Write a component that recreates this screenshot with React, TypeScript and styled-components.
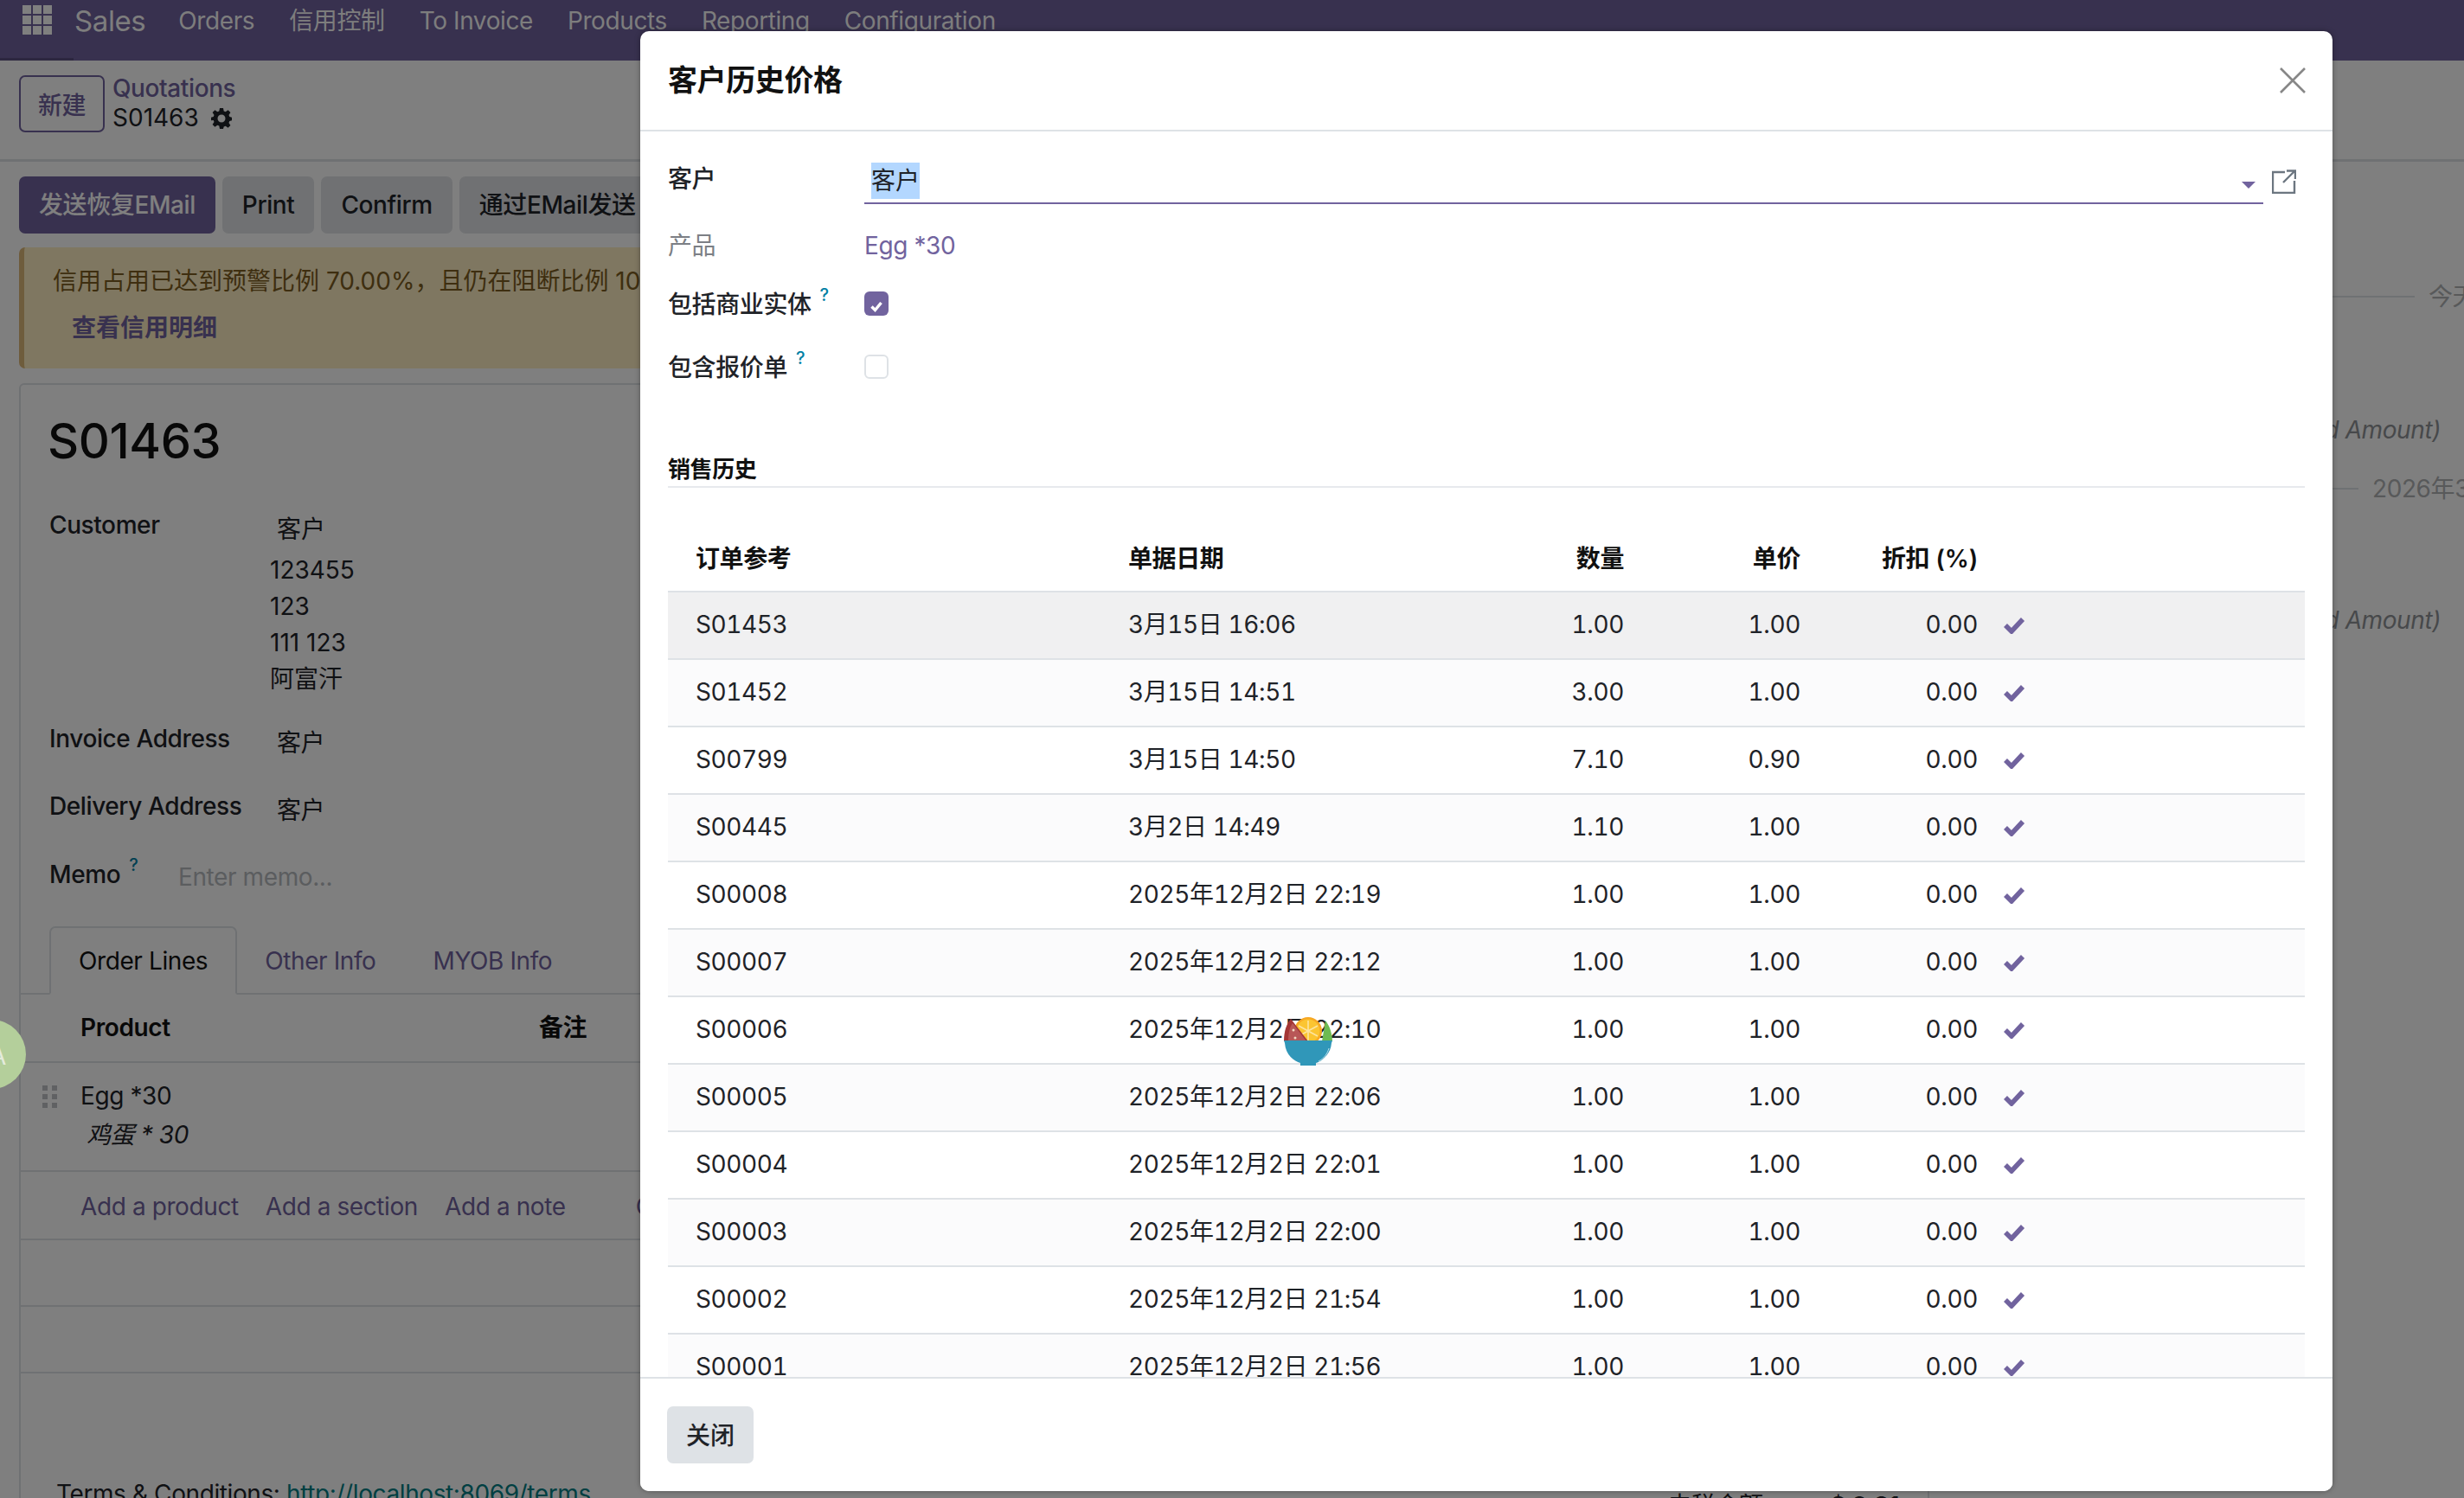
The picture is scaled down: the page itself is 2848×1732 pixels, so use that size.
import styled, { createGlobalStyle } from 'styled-components'

const orders = [
  ['S01453', '3月15日 16:06', '1.00', '1.00'],
  ['S01452', '3月15日 14:51', '3.00', '1.00'],
  ['S00799', '3月15日 14:50', '7.10', '0.90'],
  ['S00445', '3月2日 14:49', '1.10', '1.00'],
  ['S00008', '2025年12月2日 22:19', '1.00', '1.00'],
  ['S00007', '2025年12月2日 22:12', '1.00', '1.00'],
  ['S00006', '2025年12月2日 22:10', '1.00', '1.00'],
  ['S00005', '2025年12月2日 22:06', '1.00', '1.00'],
  ['S00004', '2025年12月2日 22:01', '1.00', '1.00'],
  ['S00003', '2025年12月2日 22:00', '1.00', '1.00'],
  ['S00002', '2025年12月2日 21:54', '1.00', '1.00'],
  ['S00001', '2025年12月2日 21:56', '1.00', '1.00'],
]

const navItems = ['Orders', '信用控制', 'To Invoice', 'Products', 'Reporting', 'Configuration']

function App() {
  return (
    <>
      <GlobalStyle />
      <Page>
        <NavBar>
          <AppsGrid>
            {Array.from({ length: 9 }).map((_, i) => (
              <AppsDot key={i} />
            ))}
          </AppsGrid>
          <BrandName>Sales</BrandName>
          {navItems.map((item) => (
            <NavItem key={item}>{item}</NavItem>
          ))}
        </NavBar>

        <ControlPanel>
          <NewButton>新建</NewButton>
          <Breadcrumb>
            <BreadcrumbLink>Quotations</BreadcrumbLink>
            <BreadcrumbCurrent>
              S01463
              <GearIcon />
            </BreadcrumbCurrent>
          </Breadcrumb>
        </ControlPanel>

        <Body>
          <Main>
            <ActionBar>
              <ActionButton $primary>发送恢复EMail</ActionButton>
              <ActionButton>Print</ActionButton>
              <ActionButton>Confirm</ActionButton>
              <ActionButton>通过EMail发送</ActionButton>
            </ActionBar>

            <Alert>
              <AlertText>信用占用已达到预警比例 70.00%，且仍在阻断比例 100.00% 以内</AlertText>
              <AlertLink>查看信用明细</AlertLink>
            </Alert>

            <Sheet>
              <SheetTitle>S01463</SheetTitle>
              <SheetField $h={247}>
                <SheetLabel>Customer</SheetLabel>
                <AddressBlock>
                  <PartnerName>客户</PartnerName>
                  <AddressLines>
                    <div>123455</div>
                    <div>123</div>
                    <div>111 123</div>
                    <div>阿富汗</div>
                  </AddressLines>
                </AddressBlock>
              </SheetField>
              <SheetField $h={78}>
                <SheetLabel>Invoice Address</SheetLabel>
                <PartnerName>客户</PartnerName>
              </SheetField>
              <SheetField $h={79}>
                <SheetLabel>Delivery Address</SheetLabel>
                <PartnerName>客户</PartnerName>
              </SheetField>
              <MemoField>
                <SheetLabel>
                  Memo<Help>?</Help>
                </SheetLabel>
                <MemoInput>Enter memo...</MemoInput>
              </MemoField>

              <Tabs>
                <Tab $active>Order Lines</Tab>
                <Tab>Other Info</Tab>
                <Tab>MYOB Info</Tab>
              </Tabs>

              <LinesHeader>
                <span>Product</span>
                <span>备注</span>
              </LinesHeader>
              <LineRow>
                <GripIcon>
                  {Array.from({ length: 6 }).map((_, i) => (
                    <GripDot key={i} />
                  ))}
                </GripIcon>
                <div>Egg *30</div>
                <LineNote>鸡蛋 * 30</LineNote>
              </LineRow>
              <AddRow>
                <AddLink>Add a product</AddLink>
                <AddLink>Add a section</AddLink>
                <AddLink>Add a note</AddLink>
                <AddLink $far>Catalog</AddLink>
              </AddRow>
              <EmptyRow />
              <EmptyRow />
              <SheetFooter>
                <Terms>
                  Terms &amp; Conditions: <TermsLink>http://localhost:8069/terms</TermsLink>
                </Terms>
                <Totals>
                  <span>未税金额:</span>
                  <strong>$ 0.81</strong>
                </Totals>
              </SheetFooter>
            </Sheet>
          </Main>

          <Chatter>
            <DateDivider $top={135} $line={561}>
              <span>今天</span>
            </DateDivider>
            <ChatMessage $top={112}>(Untaxed Amount)</ChatMessage>
            <DateDivider $top={26} $line={496}>
              <span>2026年3月15日</span>
            </DateDivider>
            <ChatMessage $top={110}>(Untaxed Amount)</ChatMessage>
          </Chatter>
        </Body>

        <Overlay>
          <Modal>
            <ModalHeader>
              <ModalTitle>客户历史价格</ModalTitle>
              <CloseIcon viewBox="0 0 30 30">
                <path d="M1 1 L29 29 M29 1 L1 29" />
              </CloseIcon>
            </ModalHeader>

            <ModalBody>
              <Field $h={77}>
                <FieldLabel>客户</FieldLabel>
                <InputRow>
                  <InputLine>
                    <Selected>客户</Selected>
                    <Caret />
                  </InputLine>
                  <OpenIcon viewBox="0 0 28 28">
                    <path d="M15 3 H1 V27 H26 V13" />
                    <path d="M13 15 L26 2 M17 1.5 H27 V11" />
                  </OpenIcon>
                </InputRow>
              </Field>
              <Field $h={68}>
                <FieldLabel $muted>产品</FieldLabel>
                <ProductLink>Egg *30</ProductLink>
              </Field>
              <Field $h={73}>
                <FieldLabel>
                  包括商业实体<Help>?</Help>
                </FieldLabel>
                <Checkbox $checked>
                  <svg viewBox="0 0 28 28" width="28" height="28">
                    <path d="M8.5 14.5 L12.5 18.5 L19.5 10" fill="none" stroke="#fff" strokeWidth="3.4" />
                  </svg>
                </Checkbox>
              </Field>
              <Field $h={119}>
                <FieldLabel>
                  包含报价单<Help>?</Help>
                </FieldLabel>
                <Checkbox />
              </Field>

              <SectionTitle>销售历史</SectionTitle>

              <HistoryTable>
                <colgroup>
                  <col style={{ width: 500 }} />
                  <col style={{ width: 448 }} />
                  <col style={{ width: 173 }} />
                  <col style={{ width: 204 }} />
                  <col style={{ width: 205 }} />
                  <col />
                </colgroup>
                <thead>
                  <tr>
                    <HeadCell>订单参考</HeadCell>
                    <HeadCell>单据日期</HeadCell>
                    <HeadCell $num>数量</HeadCell>
                    <HeadCell $num>单价</HeadCell>
                    <HeadCell $num>折扣 (%)</HeadCell>
                    <HeadCell />
                  </tr>
                </thead>
                <tbody>
                  {orders.map((row, i) => (
                    <HistoryRow key={row[0]} $hover={i === 0} $striped={i % 2 === 1}>
                      <TextCell>{row[0]}</TextCell>
                      <TextCell>{row[1]}</TextCell>
                      <NumCell>{row[2]}</NumCell>
                      <NumCell>{row[3]}</NumCell>
                      <NumCell>0.00</NumCell>
                      <CheckCell>
                        <CheckMark viewBox="0 0 26 20">
                          <path d="M3 10 L10 17 L23 3" />
                        </CheckMark>
                      </CheckCell>
                    </HistoryRow>
                  ))}
                </tbody>
              </HistoryTable>
            </ModalBody>

            <ModalFooter>
              <CloseButton>关闭</CloseButton>
            </ModalFooter>
          </Modal>
        </Overlay>

        <AssistantBubble>A</AssistantBubble>
        <FruitBowl viewBox="0 0 56 56">
          <path d="M44 28 L48 4 C53 10 56 20 56 28 Z" fill="#6dbb52" />
          <circle cx="28" cy="16" r="16" fill="#f7a823" />
          <circle cx="28" cy="16" r="13.500" fill="#fbc531" />
          <path d="M28 4 V28 M17 10 L39 22 M39 10 L17 22" stroke="#fde4a0" strokeWidth="1.6" />
          <path d="M0 28 C0 16 3 8 8 2 L28 28 Z" fill="#a33636" />
          <path d="M5 28 C5 18 7 11 10 7 L26 28 Z" fill="#b85757" />
          <circle cx="11" cy="15" r="1.500" fill="#f1d8c0" />
          <circle cx="13" cy="24" r="1.500" fill="#f1d8c0" />
          <path d="M0 27 H56 L55 30 C54 44 42 52 37 53 V56 H19 V53 C12 51 2 44 1 30 Z" fill="#3097b9" />
          <path d="M40 51 C46 48 50 43 52 36" fill="none" stroke="#d8eef4" strokeWidth="0.8" />
        </FruitBowl>
      </Page>
    </>
  )
}

function GearIcon() {
  return (
    <GearSvg viewBox="0 0 24 24">
      <path d="M10 0h4l.7 3.4 2 .8L19.6 2.300l2.800 2.800-1.900 2.900.8 2L24 10.700v3.600l-2.700.7-.8 2 1.900 2.900-2.800 2.800-2.900-1.900-2 .8L14 24h-4l-.7-3.400-2-.8-2.900 1.900-2.800-2.800 1.900-2.900-.8-2L0 14.300v-3.600l2.700-.7.8-2-1.900-2.900 2.800-2.800 2.900 1.900 2-.8z M12 7.500a4.500 4.500 0 1 0 0 9 4.500 4.500 0 0 0 0-9z" fillRule="evenodd" />
    </GearSvg>
  )
}

const GlobalStyle = createGlobalStyle`
  html, body {
    margin: 0;
    padding: 0;
  }
  body {
    font-family: Inter, "Noto Sans CJK SC", sans-serif;
    font-size: 28px;
    line-height: 42px;
    letter-spacing: -0.4px;
    color: #1f2328;
  }
  * {
    box-sizing: border-box;
  }
`

const Page = styled.div`
  position: relative;
  width: 2848px;
  height: 1732px;
  overflow: hidden;
  background: #fff;
`

const NavBar = styled.nav`
  position: relative;
  display: flex;
  height: 70px;
  padding-left: 26px;
  background: #71639e;
  color: rgba(255, 255, 255, 0.98);
  &::after {
    content: '';
    position: absolute;
    left: 0;
    bottom: 0;
    width: 85px;
    height: 3px;
    background: #5b4f80;
  }
`

const AppsGrid = styled.div`
  display: grid;
  grid-template-columns: repeat(3, 10px);
  grid-auto-rows: 10px;
  gap: 2px;
  margin-top: 6px;
  margin-right: 26px;
  height: 34px;
`

const AppsDot = styled.span`
  background: #fff;
`

const BrandName = styled.div`
  font-size: 33px;
  line-height: 48px;
  margin-right: 38px;
`

const NavItem = styled.div`
  line-height: 48px;
  margin-right: 40px;
  white-space: nowrap;
`

const ControlPanel = styled.div`
  display: flex;
  gap: 9px;
  height: 117px;
  padding: 17px 22px 0;
  border-bottom: 3px solid #dee2e6;
`

const NewButton = styled.button`
  width: 99px;
  height: 66px;
  padding: 3px 0 0;
  font: inherit;
  letter-spacing: inherit;
  font-weight: 500;
  color: #71639e;
  background: transparent;
  border: 2px solid #71639e;
  border-radius: 7px;
`

const Breadcrumb = styled.div`
  display: flex;
  flex-direction: column;
  margin-top: -2px;
  line-height: 34px;
`

const BreadcrumbLink = styled.div`
  font-weight: 500;
  color: #71639e;
`

const BreadcrumbCurrent = styled.div`
  display: flex;
  align-items: center;
  gap: 14px;
  letter-spacing: 0;
`

const GearSvg = styled.svg`
  width: 24px;
  height: 24px;
  margin-top: 2px;
  fill: #1f2328;
`

const Body = styled.div`
  display: flex;
  height: 1545px;
`

const Main = styled.main`
  flex: 0 0 2230px;
  padding-left: 22px;
`

const ActionBar = styled.div`
  display: flex;
  gap: 8px;
  padding-top: 17px;
`

const ActionButton = styled.button<{ $primary?: boolean }>`
  height: 66px;
  padding: 0 23px;
  font: inherit;
  letter-spacing: inherit;
  font-weight: 500;
  color: ${(p) => (p.$primary ? '#fff' : '#1f2328')};
  background: ${(p) => (p.$primary ? '#71639e' : '#e0e2e6')};
  border: 0;
  border-radius: 7px;
  white-space: nowrap;
`

const Alert = styled.div`
  height: 140px;
  margin-top: 16px;
  padding: 18px 0 0 33px;
  background: #ffeec2;
  border-left: 6px solid #ddb878;
  border-radius: 7px;
  color: #7c5d20;
  white-space: nowrap;
  letter-spacing: 0;
`

const AlertText = styled.div`
  line-height: 42px;
`

const AlertLink = styled.div`
  margin: 12px 0 0 22px;
  font-weight: 600;
  color: #71639e;
`

const Sheet = styled.section`
  height: 1300px;
  margin-top: 17px;
  padding-top: 30px;
  border: 2px solid #dee2e6;
  border-radius: 6px;
`

const SheetTitle = styled.h1`
  margin: 0 0 41px 31px;
  font-size: 56px;
  line-height: 70px;
  font-weight: 500;
  letter-spacing: -0.4px;
  color: #111;
`

const SheetField = styled.div<{ $h: number }>`
  display: flex;
  height: ${(p) => p.$h}px;
  padding-left: 33px;
`

const SheetLabel = styled.div`
  flex: 0 0 255px;
  font-weight: 500;
`

const AddressBlock = styled.div`
  display: flex;
  flex-direction: column;
  letter-spacing: 0;
`

const PartnerName = styled.div`
  margin: 5px 0 0 8px;
`

const AddressLines = styled.div`
  margin-top: 5px;
`

const MemoField = styled.div`
  display: flex;
  height: 81px;
  padding-left: 33px;
`

const MemoInput = styled.div`
  margin: 3px 0 0 -106px;
  color: #b6babf;
`

const Help = styled.sup`
  position: relative;
  top: -4px;
  margin-left: 10px;
  font-size: 20px;
  line-height: 0;
  vertical-align: 10px;
  font-weight: 500;
  color: #0180a5;
`

const Tabs = styled.div`
  display: flex;
  height: 79px;
  padding-left: 33px;
  border-bottom: 2px solid #dee2e6;
`

const Tab = styled.div<{ $active?: boolean }>`
  height: 79px;
  padding: 17px 32px 0 ${(p) => (p.$active ? 32 : 30)}px;
  border: 2px solid ${(p) => (p.$active ? '#dee2e6' : 'transparent')};
  border-bottom-color: ${(p) => (p.$active ? '#fff' : 'transparent')};
  border-radius: 7px 7px 0 0;
  color: ${(p) => (p.$active ? '#111' : '#71639e')};
`

const LinesHeader = styled.div`
  display: grid;
  grid-template-columns: 530px 1fr;
  height: 79px;
  padding: 17px 0 0 69px;
  font-weight: 600;
  color: #111;
  border-bottom: 2px solid #dee2e6;
`

const LineRow = styled.div`
  position: relative;
  height: 126px;
  padding: 17px 0 0 69px;
  border-bottom: 2px solid #dee2e6;
`

const LineNote = styled.div`
  margin: 3px 0 0 7px;
  font-style: italic;
`

const GripIcon = styled.div`
  position: absolute;
  left: 25px;
  top: 26px;
  display: grid;
  grid-template-columns: repeat(2, 6px);
  grid-auto-rows: 6px;
  gap: 4px 5px;
`

const GripDot = styled.span`
  background: #c0c3c7;
`

const AddRow = styled.div`
  display: flex;
  gap: 31px;
  height: 79px;
  padding: 19px 0 0 69px;
  border-bottom: 2px solid #dee2e6;
`

const AddLink = styled.span<{ $far?: boolean }>`
  margin-left: ${(p) => (p.$far ? 50 : 0)}px;
  color: #71639e;
`

const EmptyRow = styled.div`
  height: 77px;
  border-bottom: 2px solid #dee2e6;
`

const SheetFooter = styled.div`
  display: flex;
  justify-content: space-between;
  padding: 118px 0 0 41px;
`

const Terms = styled.div`
  white-space: nowrap;
`

const TermsLink = styled.span`
  color: #017e84;
`

const Totals = styled.div`
  display: flex;
  gap: 70px;
  margin: 14px 33px 0 0;
  strong {
    font-weight: 700;
  }
`

const Chatter = styled.aside`
  flex: 1;
  min-width: 0;
  overflow: hidden;
  font-size: 28px;
`

const DateDivider = styled.div<{ $top: number; $line: number }>`
  display: flex;
  align-items: center;
  gap: 16px;
  margin-top: ${(p) => p.$top}px;
  color: #b0b2b5;
  white-space: nowrap;
  &::before {
    content: '';
    flex: 0 0 ${(p) => p.$line}px;
    height: 2px;
    background: #dee2e6;
  }
`

const ChatMessage = styled.div<{ $top: number }>`
  margin-top: ${(p) => p.$top}px;
  padding-right: 27px;
  text-align: right;
  font-style: italic;
  color: #8f9296;
  white-space: nowrap;
`

const Overlay = styled.div`
  position: absolute;
  inset: 0;
  padding: 36px 0 0 740px;
  background: rgba(0, 0, 0, 0.5);
`

const Modal = styled.div`
  display: flex;
  flex-direction: column;
  width: 1956px;
  height: 1688px;
  background: #fff;
  border-radius: 10px;
  box-shadow: 0 0 6px rgba(0, 0, 0, 0.35);
  overflow: hidden;
`

const ModalHeader = styled.header`
  display: flex;
  flex: 0 0 116px;
  justify-content: space-between;
  align-items: center;
  padding: 0 31px 1px 32px;
  border-bottom: 2px solid #dee2e6;
`

const ModalTitle = styled.h4`
  margin: 0;
  font-size: 34px;
  line-height: 44px;
  font-weight: 600;
  color: #111;
`

const CloseIcon = styled.svg`
  width: 30px;
  height: 30px;
  fill: none;
  stroke: #878787;
  stroke-width: 2.6;
`

const ModalBody = styled.div`
  flex: 1;
  min-height: 0;
  overflow: hidden;
  padding: 32px 32px 0;
`

const Field = styled.div<{ $h: number }>`
  display: flex;
  align-items: flex-start;
  height: ${(p) => p.$h}px;
`

const FieldLabel = styled.div<{ $muted?: boolean }>`
  flex: 0 0 227px;
  padding-top: 2px;
  font-weight: ${(p) => (p.$muted ? 400 : 500)};
  color: ${(p) => (p.$muted ? '#7c7f85' : '#1f2328')};
  white-space: nowrap;
`

const InputRow = styled.div`
  display: flex;
  gap: 10px;
  width: 1655px;
  margin-top: 4px;
`

const InputLine = styled.div`
  position: relative;
  flex: 0 0 1617px;
  height: 48px;
  padding-left: 8px;
  border-bottom: 2px solid #71639e;
`

const Selected = styled.span`
  display: inline-block;
  height: 42px;
  line-height: 42px;
  letter-spacing: 0;
  background: #b3d7ff;
`

const Caret = styled.span`
  position: absolute;
  top: 22px;
  right: 9px;
  border-left: 8px solid transparent;
  border-right: 8px solid transparent;
  border-top: 8px solid #71639e;
`

const OpenIcon = styled.svg`
  flex: none;
  width: 28px;
  height: 28px;
  margin-top: 8px;
  fill: none;
  stroke: #6c7680;
  stroke-width: 2.4;
`

const ProductLink = styled.span`
  padding-top: 2px;
  color: #71639e;
`

const Checkbox = styled.span<{ $checked?: boolean }>`
  display: block;
  width: 28px;
  height: 28px;
  margin-top: 8px;
  background: ${(p) => (p.$checked ? '#71639e' : '#fff')};
  border: ${(p) => (p.$checked ? 'none' : '2px solid #dee2e6')};
  border-radius: 6px;
`

const SectionTitle = styled.h5`
  margin: 0 0 42px;
  height: 43px;
  font-size: 26px;
  line-height: 43px;
  font-weight: 600;
  color: #111;
  border-bottom: 2px solid #e7e9ed;
`

const HistoryTable = styled.table`
  width: 1892px;
  table-layout: fixed;
  border-collapse: collapse;
  letter-spacing: -0.4px;
  font-variant-numeric: tabular-nums;
`

const HeadCell = styled.th<{ $num?: boolean }>`
  height: 78px;
  padding: 2px ${(p) => (p.$num ? '16px' : '32px')} 0;
  text-align: ${(p) => (p.$num ? 'right' : 'left')};
  font-weight: 600;
  color: #111;
  white-space: nowrap;
  border-bottom: 2px solid #dee2e6;
`

const HistoryRow = styled.tr<{ $hover?: boolean; $striped?: boolean }>`
  background: ${(p) => (p.$hover ? '#f0f0f1' : p.$striped ? '#fbfbfc' : '#fff')};
  border-bottom: 2px solid #dee2e6;
`

const TextCell = styled.td`
  height: 78px;
  padding: 0 32px 3px;
  white-space: nowrap;
`

const NumCell = styled.td`
  height: 78px;
  padding: 0 16px 3px;
  text-align: right;
`

const CheckCell = styled.td`
  padding: 0 0 0 13px;
`

const CheckMark = styled.svg`
  display: block;
  width: 26px;
  height: 20px;
  fill: none;
  stroke: #71639e;
  stroke-width: 5.6;
`

const ModalFooter = styled.footer`
  flex: 0 0 130px;
  padding: 32px 31px;
  background: #fff;
  border-top: 2px solid #dee2e6;
`

const CloseButton = styled.button`
  width: 100px;
  height: 66px;
  padding: 2px 0 0;
  font: inherit;
  letter-spacing: 0;
  font-weight: 500;
  color: #1f2328;
  background: #dee2e6;
  border: 0;
  border-radius: 7px;
`

const AssistantBubble = styled.div`
  position: absolute;
  left: -50px;
  top: 1179px;
  width: 80px;
  height: 80px;
  padding-left: 38px;
  line-height: 84px;
  color: #e4ebdc;
  background: #b4cf9b;
  border-radius: 50%;
`

const FruitBowl = styled.svg`
  position: absolute;
  left: 1484px;
  top: 1176px;
  width: 56px;
  height: 56px;
`

export default App
